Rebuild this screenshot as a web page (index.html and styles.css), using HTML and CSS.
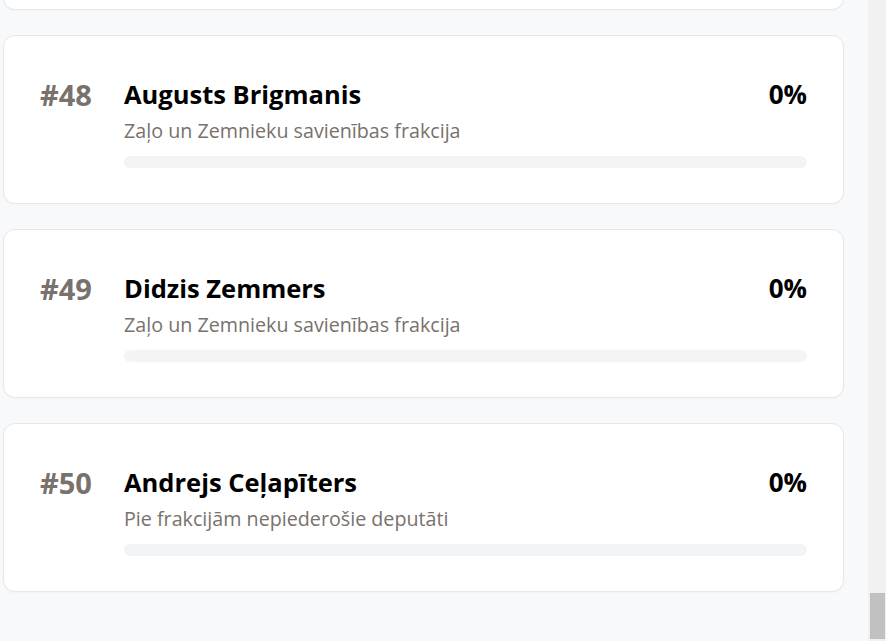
FILE: index.html
```html
<!DOCTYPE html>
<html lang="lv">
<head>
<meta charset="utf-8">
<title>Deputāti</title>
<link rel="stylesheet" href="styles.css">
</head>
<body>
<div class="frame">
  <main class="viewport">
    <div class="list">
      <div class="card">
        <div class="rank">#47</div>
        <div class="info">
          <div class="head"><span class="name">&nbsp;</span><span class="pct">0%</span></div>
          <div class="party">&nbsp;</div>
          <div class="bar"><div class="fill" style="width:0%"></div></div>
        </div>
      </div>
      <div class="card">
        <div class="rank">#48</div>
        <div class="info">
          <div class="head"><span class="name">Augusts Brigmanis</span><span class="pct">0%</span></div>
          <div class="party">Zaļo un Zemnieku savienības frakcija</div>
          <div class="bar"><div class="fill" style="width:0%"></div></div>
        </div>
      </div>
      <div class="card">
        <div class="rank">#49</div>
        <div class="info">
          <div class="head"><span class="name">Didzis Zemmers</span><span class="pct">0%</span></div>
          <div class="party">Zaļo un Zemnieku savienības frakcija</div>
          <div class="bar"><div class="fill" style="width:0%"></div></div>
        </div>
      </div>
      <div class="card">
        <div class="rank">#50</div>
        <div class="info">
          <div class="head"><span class="name">Andrejs Ceļapīters</span><span class="pct">0%</span></div>
          <div class="party">Pie frakcijām nepiederošie deputāti</div>
          <div class="bar"><div class="fill" style="width:0%"></div></div>
        </div>
      </div>
    </div>
  </main>
  <div class="scrollbar"><div class="thumb"></div></div>
</div>
</body>
</html>
```
FILE: styles.css
```css
html, body {
  margin: 0;
  padding: 0;
  height: 100%;
}
body {
  font-family: "Open Sans", "Noto Sans", sans-serif;
  background: #f8f9fa;
  color: #000;
}
.frame {
  display: flex;
  height: 641px;
  overflow: hidden;
}
.viewport {
  flex: 1;
  display: flex;
  flex-direction: column;
  justify-content: flex-end;
  overflow: hidden;
  padding: 0 24px 49px 3px;
}
.list {
  display: flex;
  flex-direction: column;
  gap: 25px;
}
.card {
  flex: none;
  background: #fff;
  border: 1px solid #e5e7eb;
  border-radius: 12px;
  box-shadow: 0 1px 2px rgba(0,0,0,0.03);
  padding: 37px 36px 35px 36px;
  display: flex;
  align-items: flex-start;
}
.rank {
  width: 84px;
  flex: none;
  font-size: 29px;
  font-weight: 700;
  color: #78716c;
  line-height: 42px;
  padding-top: 1px;
}
.info {
  flex: 1;
  display: flex;
  flex-direction: column;
}
.head {
  display: flex;
  justify-content: space-between;
  align-items: baseline;
  line-height: 42px;
  height: 42px;
}
.name {
  font-size: 25.5px;
  font-weight: 700;
}
.pct {
  font-size: 26px;
  font-weight: 700;
}
.party {
  margin-top: 1px;
  font-size: 19.7px;
  color: #78716c;
  line-height: 30px;
}
.bar {
  margin-top: 10px;
  height: 12px;
  border-radius: 6px;
  background: #f3f4f6;
  overflow: hidden;
}
.fill {
  height: 100%;
  background: #3b82f6;
}
.scrollbar {
  width: 18px;
  flex: none;
  background: #f1f1f1;
  display: flex;
  flex-direction: column;
  justify-content: flex-end;
  padding: 0 1px 2px 2px;
  box-sizing: border-box;
}
.thumb {
  height: 46px;
  background: #c1c1c1;
}
```
